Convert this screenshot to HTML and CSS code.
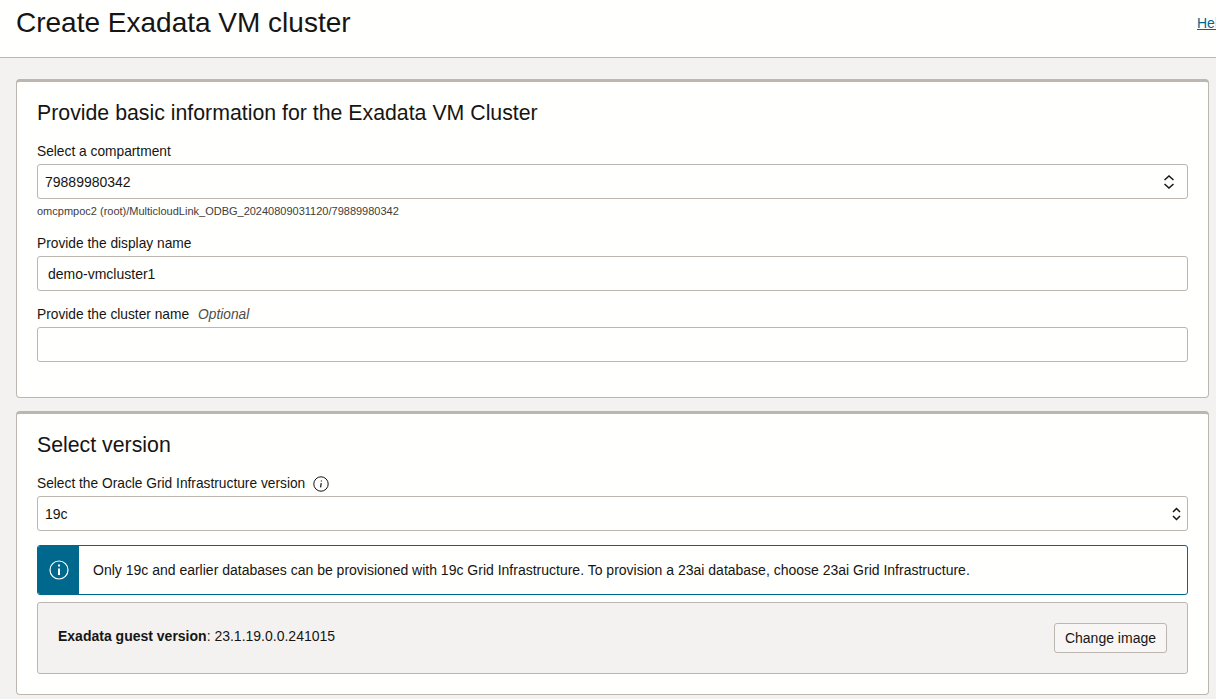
FILE: index.html
```html
<!DOCTYPE html>
<html lang="en">

<head>
  <meta charset="UTF-8" />
  <title>Create Exadata VM cluster</title>
  <link rel="stylesheet" href="styles.css">
</head>

<body>
<div class="page-header">
  <h1>Create Exadata VM cluster</h1>
  <a class="help-link" href="#">Help</a>
</div>

<div class="page-body">
  <section class="card card-basic">
    <h2>Provide basic information for the Exadata VM Cluster</h2>

    <label class="field-label">Select a compartment</label>
    <div class="select-box">
      <span>79889980342</span>
      <svg class="updown updown-wide" viewBox="0 0 12 14" width="12" height="14">
        <path d="M1.5 5 L6 1 L10.5 5 M1.5 9 L6 13 L10.5 9" fill="none" stroke="#161513" stroke-width="1.5" />
      </svg>
    </div>
    <p class="field-hint">omcpmpoc2 (root)/MulticloudLink_ODBG_20240809031120/79889980342</p>

    <label class="field-label label-name">Provide the display name</label>
    <input class="text-input" type="text" value="demo-vmcluster1" />

    <label class="field-label label-cluster">Provide the cluster name <em>Optional</em></label>
    <input class="text-input" type="text" />
  </section>

  <section class="card card-version">
    <h2>Select version</h2>

    <label class="field-label">
      Select the Oracle Grid Infrastructure version
      <svg class="info-small" viewBox="0 0 16 16" width="16" height="16">
        <circle cx="8" cy="8" r="7.2" fill="none" stroke="#161513" stroke-width="1" />
        <path d="M8.4 4.4 L8.4 5.4 M8.2 7.2 L7.6 11.4" fill="none" stroke="#161513" stroke-width="1.2" />
      </svg>
    </label>
    <div class="select-box select-native">
      <span>19c</span>
      <svg class="updown" viewBox="0 0 9 14" width="9" height="14">
        <path d="M1 5 L4.5 1.5 L8 5 M1 9 L4.5 12.5 L8 9" fill="none" stroke="#161513" stroke-width="1.5" />
      </svg>
    </div>

    <div class="info-banner">
      <div class="info-banner-icon">
        <svg viewBox="0 0 20 20" width="20" height="20">
          <circle cx="10" cy="10" r="9" fill="none" stroke="#fff" stroke-width="1.2" />
          <path d="M10 4.6 L10 6.6 M10 8.4 L10 15" fill="none" stroke="#fff" stroke-width="2" />
        </svg>
      </div>
      <p>Only 19c and earlier databases can be provisioned with 19c Grid Infrastructure. To provision a 23ai database, choose 23ai Grid Infrastructure.</p>
    </div>

    <div class="image-panel">
      <p><strong>Exadata guest version</strong>: 23.1.19.0.0.241015</p>
      <button class="btn" type="button">Change image</button>
    </div>
  </section>
</div>
</body>

</html>
```
FILE: styles.css
```css
* {
  box-sizing: border-box;
}

html,
body {
  height: 100%;
}

body {
  margin: 0;
  overflow: hidden;
  background: #f3f2f1;
  color: #161513;
  font-family: "Liberation Sans", Arial, sans-serif;
  font-size: 14px;
}

.page-header {
  display: flex;
  justify-content: space-between;
  height: 58px;
  padding: 7px 0 0 16px;
  background: #fffffd;
  border-bottom: 1px solid #bcb6b1;
  overflow: hidden;
}

.page-header h1 {
  margin: 0;
  font-size: 28px;
  font-weight: 400;
  line-height: 32px;
}

.help-link {
  width: 19px;
  margin-top: 8px;
  overflow: hidden;
  color: #00688c;
  font-size: 14px;
  line-height: 16px;
  white-space: nowrap;
}

.page-body {
  padding: 21px 7px 0 16px;
}

.card {
  padding: 0 20px;
  background: #fffffd;
  border: 1px solid #bcb6b1;
  border-top-width: 3px;
  border-radius: 4px;
}

.card-basic {
  height: 319px;
  padding-top: 19px;
  margin-bottom: 13px;
}

.card-version {
  height: 284px;
  padding-top: 19px;
}

.card h2 {
  margin: 0 0 19px;
  font-size: 21.3px;
  font-weight: 400;
  line-height: 24px;
}

.field-label {
  display: flex;
  align-items: center;
  height: 16px;
  margin-bottom: 4px;
  font-size: 13.75px;
  line-height: 16px;
}

.field-label em {
  margin-left: 9px;
  color: #4f4c49;
}

.label-name {
  margin-top: 19px;
}

.label-cluster {
  margin-top: 16px;
}

.select-box,
.text-input {
  display: flex;
  align-items: center;
  justify-content: space-between;
  width: 100%;
  height: 35px;
  background: #fffffd;
  border: 1px solid #bcb6b1;
  border-radius: 3px;
  color: #161513;
  font-family: inherit;
  font-size: 14px;
}

.select-box {
  padding: 0 12px 0 7px;
}

.select-native {
  padding-right: 6px;
}

.text-input {
  padding: 0 10px;
  outline: none;
}

.field-hint {
  margin: 6px 0 0;
  color: #3f3c39;
  font-size: 11px;
  line-height: 12px;
}

.info-small {
  margin-left: 8px;
}

.info-banner {
  display: flex;
  align-items: center;
  height: 50px;
  margin-top: 14px;
  overflow: hidden;
  border: 1px solid #00688c;
  border-radius: 3px;
}

.info-banner-icon {
  display: flex;
  align-items: center;
  justify-content: center;
  width: 41px;
  height: 100%;
  background: #00688c;
}

.info-banner p {
  margin: 0 0 0 14px;
  line-height: 16px;
}

.image-panel {
  display: flex;
  align-items: center;
  justify-content: space-between;
  height: 72px;
  margin-top: 7px;
  padding: 0 20px;
  background: #f3f2f1;
  border: 1px solid #bcb6b1;
  border-radius: 3px;
}

.image-panel p {
  margin: 0 0 4px;
}

.btn {
  height: 30px;
  padding: 0 10px;
  background: #f7f6f5;
  border: 1px solid #bcb6b1;
  border-radius: 3px;
  color: #161513;
  font-family: inherit;
  font-size: 14px;
}
```
